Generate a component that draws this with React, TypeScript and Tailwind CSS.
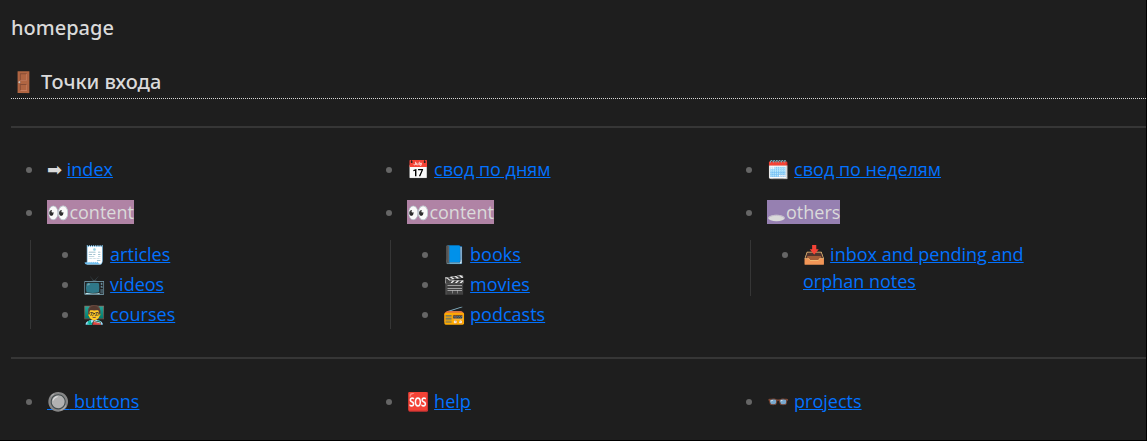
import type { ReactNode } from "react";

type Entry = { icon: ReactNode; label: string; wholeLink?: boolean };

type Column = {
  top: Entry;
  mark: ReactNode;
  markClass: string;
  children: Entry[];
};

function HoleIcon() {
  return (
    <svg viewBox="0 0 19 10" className="inline-block h-2.5 w-[19px] align-[-4px]" aria-hidden="true">
      <ellipse cx="9.5" cy="5" rx="8.3" ry="3.3" fill="#dadada" />
      <path d="M2 4.600C3.500 2.900 6.500 2.300 9.500 2.300s6 .6 7.500 2.300" fill="none" stroke="#b9adc6" strokeWidth="0.700" />
    </svg>
  );
}

const columns: Column[] = [
  {
    top: { icon: <span className="font-['DejaVu_Sans',sans-serif]">➡&#xFE0E;</span>, label: "index" },
    mark: "👀content",
    markClass: "bg-[#b083a5]",
    children: [
      { icon: "🧾", label: "articles" },
      { icon: "📺", label: "videos" },
      { icon: "👨‍🏫", label: "courses" },
    ],
  },
  {
    top: { icon: "📅", label: "свод по дням" },
    mark: "👀content",
    markClass: "bg-[#b083a5]",
    children: [
      { icon: "📘", label: "books" },
      { icon: "🎬", label: "movies" },
      { icon: "📻", label: "podcasts" },
    ],
  },
  {
    top: { icon: "🗓️", label: "свод по неделям" },
    mark: (
      <>
        <HoleIcon />
        others
      </>
    ),
    markClass: "bg-[#9680b1]",
    children: [{ icon: "📥", label: "inbox and pending and orphan notes" }],
  },
];

const footer: Entry[] = [
  { icon: "🔘", label: "buttons", wholeLink: true },
  { icon: "🆘", label: "help" },
  { icon: "👓", label: "projects" },
];

function Item({ children }: { children: ReactNode }) {
  return (
    <li className="flex pl-[15px]">
      <span className="mt-[11px] mr-[15px] size-1.5 shrink-0 rounded-full bg-[#666666]" />
      <div className="min-w-0 flex-1">{children}</div>
    </li>
  );
}

function NoteLink({ icon, label, wholeLink }: Entry) {
  const link = "text-[#0272ff] underline";
  if (wholeLink) {
    return (
      <a href="#" className={link}>
        {icon} {label}
      </a>
    );
  }
  return (
    <>
      {icon}{" "}
      <a href="#" className={link}>
        {label}
      </a>
    </>
  );
}

export default function App() {
  return (
    <main className="min-h-screen border-r border-b border-black bg-[#1e1e1e] pt-3.5 pb-6 pl-[11px] font-['Open_Sans','Noto_Color_Emoji',sans-serif] text-lg leading-[27px] text-[#dadada]">
      <h1 className="font-['Noto_Sans','Noto_Color_Emoji',sans-serif] text-xl leading-7 font-medium">homepage</h1>
      <h2 className="mt-[26px] border-b border-dotted border-[#dadada] pb-[2px] font-['Noto_Sans','Noto_Color_Emoji',sans-serif] text-xl leading-7 font-medium">
        🚪 Точки входа
      </h2>
      <hr className="mt-[27px] mb-7 border-t-2 border-[#363636]" />
      <div className="grid grid-cols-[repeat(auto-fill,340px)] gap-x-5 gap-y-7">
        {columns.map((column) => (
          <ul key={column.top.label} className="flex flex-col gap-4">
            <Item>
              <NoteLink {...column.top} />
            </Item>
            <Item>
              <mark className={`text-[#dadada] ${column.markClass}`}>{column.mark}</mark>
              <ul className="mt-3.5 -ml-[17px] flex flex-col gap-[3px] border-l border-[#363636] py-px pl-4">
                {column.children.map((entry) => (
                  <Item key={entry.label}>
                    <NoteLink {...entry} />
                  </Item>
                ))}
              </ul>
            </Item>
          </ul>
        ))}
      </div>
      <hr className="mt-7 mb-[29px] border-t-2 border-[#363636]" />
      <ul className="grid grid-cols-[repeat(auto-fill,340px)] gap-x-5 gap-y-4">
        {footer.map((entry) => (
          <Item key={entry.label}>
            <NoteLink {...entry} />
          </Item>
        ))}
      </ul>
    </main>
  );
}
